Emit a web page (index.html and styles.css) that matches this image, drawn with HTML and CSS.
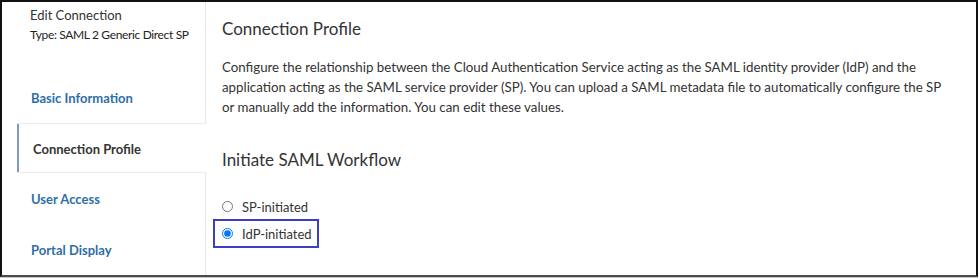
FILE: index.html
```html
<!DOCTYPE html>
<html lang="en">
<head>
<meta charset="utf-8">
<title>Edit Connection</title>
<link rel="stylesheet" href="styles.css">
</head>
<body>
<div class="frame">
  <nav class="sidebar">
    <div class="group group-top">
      <div class="header">
        <div class="title">Edit Connection</div>
        <div class="type">Type: SAML 2 Generic Direct SP</div>
      </div>
      <div class="item">Basic Information</div>
    </div>
    <div class="item active">Connection Profile</div>
    <div class="group group-bottom">
      <div class="item">User Access</div>
      <div class="item">Portal Display</div>
    </div>
  </nav>
  <main class="content">
    <h1 class="heading">Connection Profile</h1>
    <p class="desc">Configure the relationship between the Cloud Authentication Service acting as the SAML identity provider (IdP) and the application acting as the SAML service provider (SP). You can upload a SAML metadata file to automatically configure the SP or manually add the information. You can edit these values.</p>
    <h2 class="heading heading-2">Initiate SAML Workflow</h2>
    <div class="radios">
      <label class="radio-row"><input type="radio" name="flow" class="radio"><span>SP-initiated</span></label>
      <label class="radio-row highlight"><input type="radio" name="flow" class="radio" checked><span>IdP-initiated</span></label>
    </div>
  </main>
</div>
</body>
</html>
```

FILE: styles.css
```css
* { box-sizing: border-box; }
html, body { margin: 0; padding: 0; background: #fff; }
body {
  font-family: Lato, "Open Sans", sans-serif;
  color: #333;
  width: 979px;
  height: 278px;
  overflow: hidden;
}
.frame {
  width: 978px;
  height: 277px;
  border: 2px solid #111;
  border-bottom-color: #4a4a4a;
  box-shadow: 0 1px 0 #c4c4c4;
  padding-left: 15px;
  display: flex;
  overflow: hidden;
}
.sidebar {
  width: 189px;
  flex: none;
  display: flex;
  flex-direction: column;
}
.group {
  border-right: 1px solid #e9e9e9;
}
.group-top {
  border-bottom: 1px solid #ececec;
}
.group-bottom {
  border-top: 1px solid #ececec;
  flex: 1;
}
.header {
  height: 70px;
  padding: 4px 0 0 13px;
}
.title {
  font-size: 13px;
  line-height: 18px;
  color: #333;
}
.type {
  font-size: 12px;
  line-height: 16px;
  margin-top: 3px;
  color: #222;
  letter-spacing: -0.35px;
}
.item {
  height: 51px;
  display: flex;
  align-items: center;
  padding: 1px 0 0 14px;
  font-size: 13px;
  font-weight: 700;
  color: #2f6ea8;
}
.item.active {
  height: 50px;
  border-left: 2px solid #7f9bbb;
  color: #333;
}
.content {
  flex: 1;
  padding-left: 16px;
}
.heading {
  margin: 15px 0 0;
  font-size: 17px;
  line-height: 24px;
  font-weight: 400;
  color: #333;
}
.heading-2 {
  margin-top: 31px;
}
.desc {
  margin: 16px 0 0;
  width: 722px;
  font-size: 13.3px;
  line-height: 20px;
  color: #333;
}
.radios {
  margin-top: 22px;
  margin-left: -9px;
  display: flex;
  flex-direction: column;
}
.radio-row {
  display: flex;
  align-items: center;
  align-self: flex-start;
  height: 25px;
  padding: 0 5px 0 7px;
  border: 2px solid transparent;
  font-size: 13px;
  color: #333;
}
.radio-row.highlight {
  border-color: #3b3fc2;
  height: 29px;
}
.radio {
  margin: 0 9px 0 0;
  width: 11px;
  height: 11px;
}
```
